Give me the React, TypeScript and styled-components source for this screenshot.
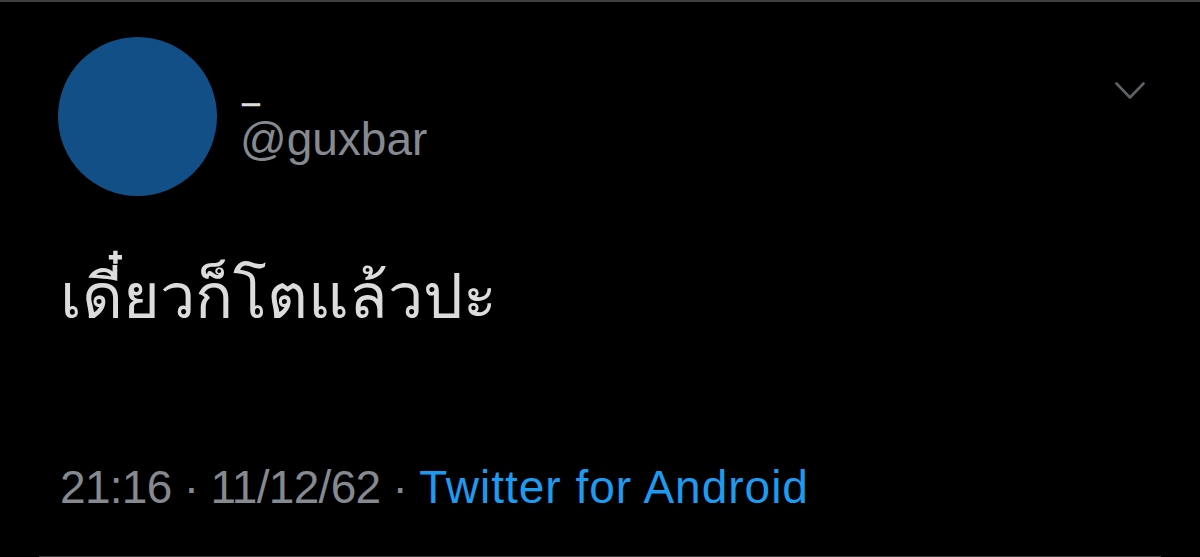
import React, { FunctionComponent } from "react";
import styled, { createGlobalStyle } from "styled-components";

const GlobalStyle = createGlobalStyle`
  html, body {
    margin: 0;
    padding: 0;
    background: #000;
  }
  body {
    font-family: "Liberation Sans", Arial, sans-serif;
  }
`;

const Card = styled.div`
  width: 1200px;
  height: 557px;
  box-sizing: border-box;
  border-top: 2px solid #3f3f3f;
  display: flex;
  flex-direction: column;
  overflow: hidden;
`;

const Header = styled.div`
  display: flex;
  align-items: flex-start;
  padding: 35px 55px 0 58px;
`;

const Avatar = styled.div`
  width: 159px;
  height: 159px;
  border-radius: 50%;
  background: #134f87;
  flex-shrink: 0;
`;

const NameBlock = styled.div`
  display: flex;
  flex-direction: column;
  margin: 55px 0 0 23px;
  flex: 1;
`;

const DisplayName = styled.div`
  color: #dcdcdc;
  font-size: 20px;
  font-weight: 700;
  line-height: 22px;
  height: 22px;
  span {
    display: inline-block;
    -webkit-text-stroke: 0.5px #dcdcdc;
    transform: scaleX(3.3);
    transform-origin: left center;
  }
`;

const Handle = styled.div`
  color: #848a90;
  font-size: 46px;
  line-height: 47px;
  margin-top: 2px;
`;

const MoreButton = styled.div`
  margin-top: 45px;
  width: 30px;
  height: 18px;
  display: flex;
  svg {
    display: block;
  }
`;

const TweetText = styled.div`
  color: #dcdcdc;
  font-family: "Noto Sans", "DejaVu Sans", sans-serif;
  font-size: 63px;
  line-height: 80px;
  margin: 58px 0 0 60px;
`;

const Meta = styled.div`
  margin: auto 0 0 60px;
  font-size: 46px;
  line-height: 52px;
  letter-spacing: -0.7px;
  color: #848a90;
  padding-bottom: 43px;
`;

const Source = styled.span<{ $link?: boolean }>`
  color: ${(p) => (p.$link ? "#1d9bf0" : "inherit")};
  letter-spacing: ${(p) => (p.$link ? "1px" : "inherit")};
`;

const Divider = styled.div`
  height: 1px;
  background: #3a3a3a;
  margin: 0 39px;
`;

const App: FunctionComponent<{}> = () => {
  return (
    <>
      <GlobalStyle />
      <Card>
        <Header>
          <Avatar />
          <NameBlock>
            <DisplayName>
              <span>-</span>
            </DisplayName>
            <Handle>@guxbar</Handle>
          </NameBlock>
          <MoreButton>
            <svg width="30" height="18" viewBox="0 0 30 18" fill="none">
              <path
                d="M1.5 1.5 L15 15.5 L28.5 1.5"
                stroke="#5d6166"
                strokeWidth="2.6"
                strokeLinecap="round"
                strokeLinejoin="round"
              />
            </svg>
          </MoreButton>
        </Header>
        <TweetText>เดี๋ยวก็โตแล้วปะ</TweetText>
        <Meta>
          21:16 · 11/12/62 · <Source $link>Twitter for Android</Source>
        </Meta>
        <Divider />
      </Card>
    </>
  );
};

export default App;
